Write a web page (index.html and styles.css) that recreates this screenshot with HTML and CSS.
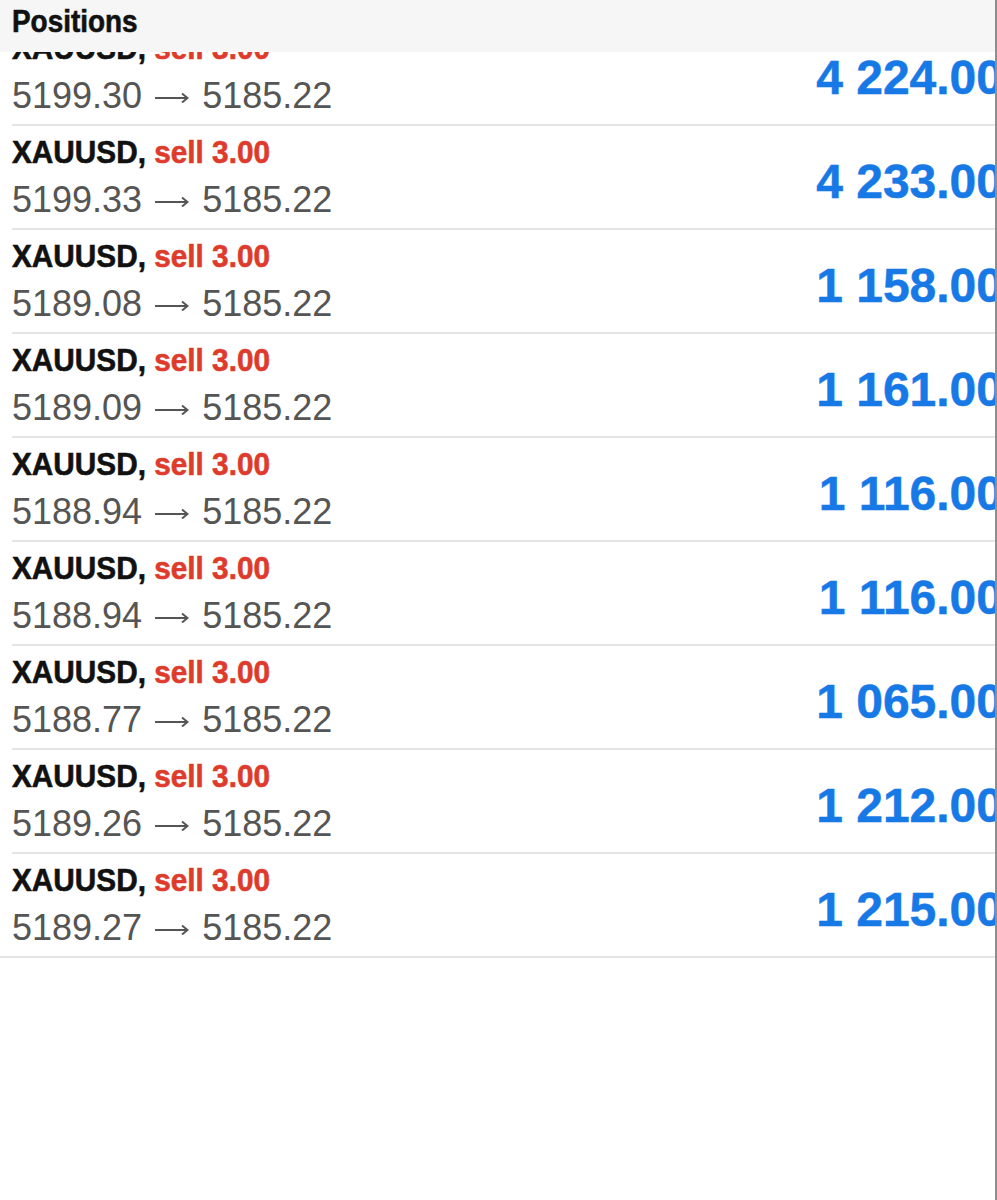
FILE: index.html
```html
<!DOCTYPE html>
<html lang="en">
<head>
  <meta charset="UTF-8" />
  <meta name="viewport" content="width=device-width, initial-scale=1.0" />
  <title>Positions</title>
  <link rel="stylesheet" href="styles.css">
</head>
<body>
  <div class="screen">
    <div class="header"><span class="title">Positions</span></div>

    <div class="positions">
      <div class="position">
        <div class="info">
          <div class="symbol">XAUUSD, <span class="side">sell 3.00</span></div>
          <div class="prices">5199.30 <svg class="arrow" viewBox="0 0 34 12" width="34" height="12"><path d="M0 6H32M27 1.5L32.5 6L27 10.5"/></svg> 5185.22</div>
        </div>
        <div class="profit">4 224.00</div>
      </div>
      <div class="position">
        <div class="info">
          <div class="symbol">XAUUSD, <span class="side">sell 3.00</span></div>
          <div class="prices">5199.33 <svg class="arrow" viewBox="0 0 34 12" width="34" height="12"><path d="M0 6H32M27 1.5L32.5 6L27 10.5"/></svg> 5185.22</div>
        </div>
        <div class="profit">4 233.00</div>
      </div>
      <div class="position">
        <div class="info">
          <div class="symbol">XAUUSD, <span class="side">sell 3.00</span></div>
          <div class="prices">5189.08 <svg class="arrow" viewBox="0 0 34 12" width="34" height="12"><path d="M0 6H32M27 1.5L32.5 6L27 10.5"/></svg> 5185.22</div>
        </div>
        <div class="profit">1 158.00</div>
      </div>
      <div class="position">
        <div class="info">
          <div class="symbol">XAUUSD, <span class="side">sell 3.00</span></div>
          <div class="prices">5189.09 <svg class="arrow" viewBox="0 0 34 12" width="34" height="12"><path d="M0 6H32M27 1.5L32.5 6L27 10.5"/></svg> 5185.22</div>
        </div>
        <div class="profit">1 161.00</div>
      </div>
      <div class="position">
        <div class="info">
          <div class="symbol">XAUUSD, <span class="side">sell 3.00</span></div>
          <div class="prices">5188.94 <svg class="arrow" viewBox="0 0 34 12" width="34" height="12"><path d="M0 6H32M27 1.5L32.5 6L27 10.5"/></svg> 5185.22</div>
        </div>
        <div class="profit">1 116.00</div>
      </div>
      <div class="position">
        <div class="info">
          <div class="symbol">XAUUSD, <span class="side">sell 3.00</span></div>
          <div class="prices">5188.94 <svg class="arrow" viewBox="0 0 34 12" width="34" height="12"><path d="M0 6H32M27 1.5L32.5 6L27 10.5"/></svg> 5185.22</div>
        </div>
        <div class="profit">1 116.00</div>
      </div>
      <div class="position">
        <div class="info">
          <div class="symbol">XAUUSD, <span class="side">sell 3.00</span></div>
          <div class="prices">5188.77 <svg class="arrow" viewBox="0 0 34 12" width="34" height="12"><path d="M0 6H32M27 1.5L32.5 6L27 10.5"/></svg> 5185.22</div>
        </div>
        <div class="profit">1 065.00</div>
      </div>
      <div class="position">
        <div class="info">
          <div class="symbol">XAUUSD, <span class="side">sell 3.00</span></div>
          <div class="prices">5189.26 <svg class="arrow" viewBox="0 0 34 12" width="34" height="12"><path d="M0 6H32M27 1.5L32.5 6L27 10.5"/></svg> 5185.22</div>
        </div>
        <div class="profit">1 212.00</div>
      </div>
      <div class="position last">
        <div class="info">
          <div class="symbol">XAUUSD, <span class="side">sell 3.00</span></div>
          <div class="prices">5189.27 <svg class="arrow" viewBox="0 0 34 12" width="34" height="12"><path d="M0 6H32M27 1.5L32.5 6L27 10.5"/></svg> 5185.22</div>
        </div>
        <div class="profit">1 215.00</div>
      </div>
    </div>
  </div>
</body>
</html>
```

FILE: styles.css
```css
body {
  margin: 0;
  background: #fff;
  font-family: "Liberation Sans", Arial, sans-serif;
}

.screen {
  position: relative;
  height: 1200px;
  width: 995px;
  overflow: hidden;
  border-right: 2px solid #8e8e8e;
}

/* title bar sits over the scrolled list */
.header {
  position: absolute;
  top: 0;
  left: 0;
  right: 0;
  z-index: 2;
  height: 52px;
  padding-left: 12px;
  box-sizing: border-box;
  background: #f6f6f6;
}

.title {
  display: inline-block;
  transform: scaleX(0.9);
  transform-origin: left center;
  color: #111;
  font-size: 31px;
  font-weight: bold;
  line-height: 44px;
  -webkit-text-stroke: 0.6px #111;
}

.positions {
  padding-top: 22px;
}

.position {
  display: flex;
  align-items: center;
  justify-content: space-between;
  height: 104px;
  box-sizing: border-box;
  margin-left: 12px;
  border-bottom: 2px solid #e4e4e4;
}

.position.last {
  margin-left: 0;
  padding-left: 12px;
}

.info {
  height: 102px;
  box-sizing: border-box;
  padding-top: 6px;
}

.symbol {
  transform: scaleX(0.93);
  transform-origin: left center;
  font-size: 32px;
  font-weight: bold;
  line-height: 40px;
  color: #111;
  white-space: nowrap;
  -webkit-text-stroke: 0.6px currentColor;
}

.side {
  color: #de3b2d;
}

.prices {
  font-size: 36px;
  line-height: 56px;
  color: #555;
  white-space: nowrap;
}

.arrow {
  margin: 0 3px;
  vertical-align: 4px;
  fill: none;
  stroke: #555;
  stroke-width: 2;
}

.profit {
  margin-right: -8px;
  padding-top: 8px;
  font-size: 48px;
  font-weight: bold;
  color: #1779e6;
  white-space: nowrap;
  -webkit-text-stroke: 0.5px currentColor;
}
```
